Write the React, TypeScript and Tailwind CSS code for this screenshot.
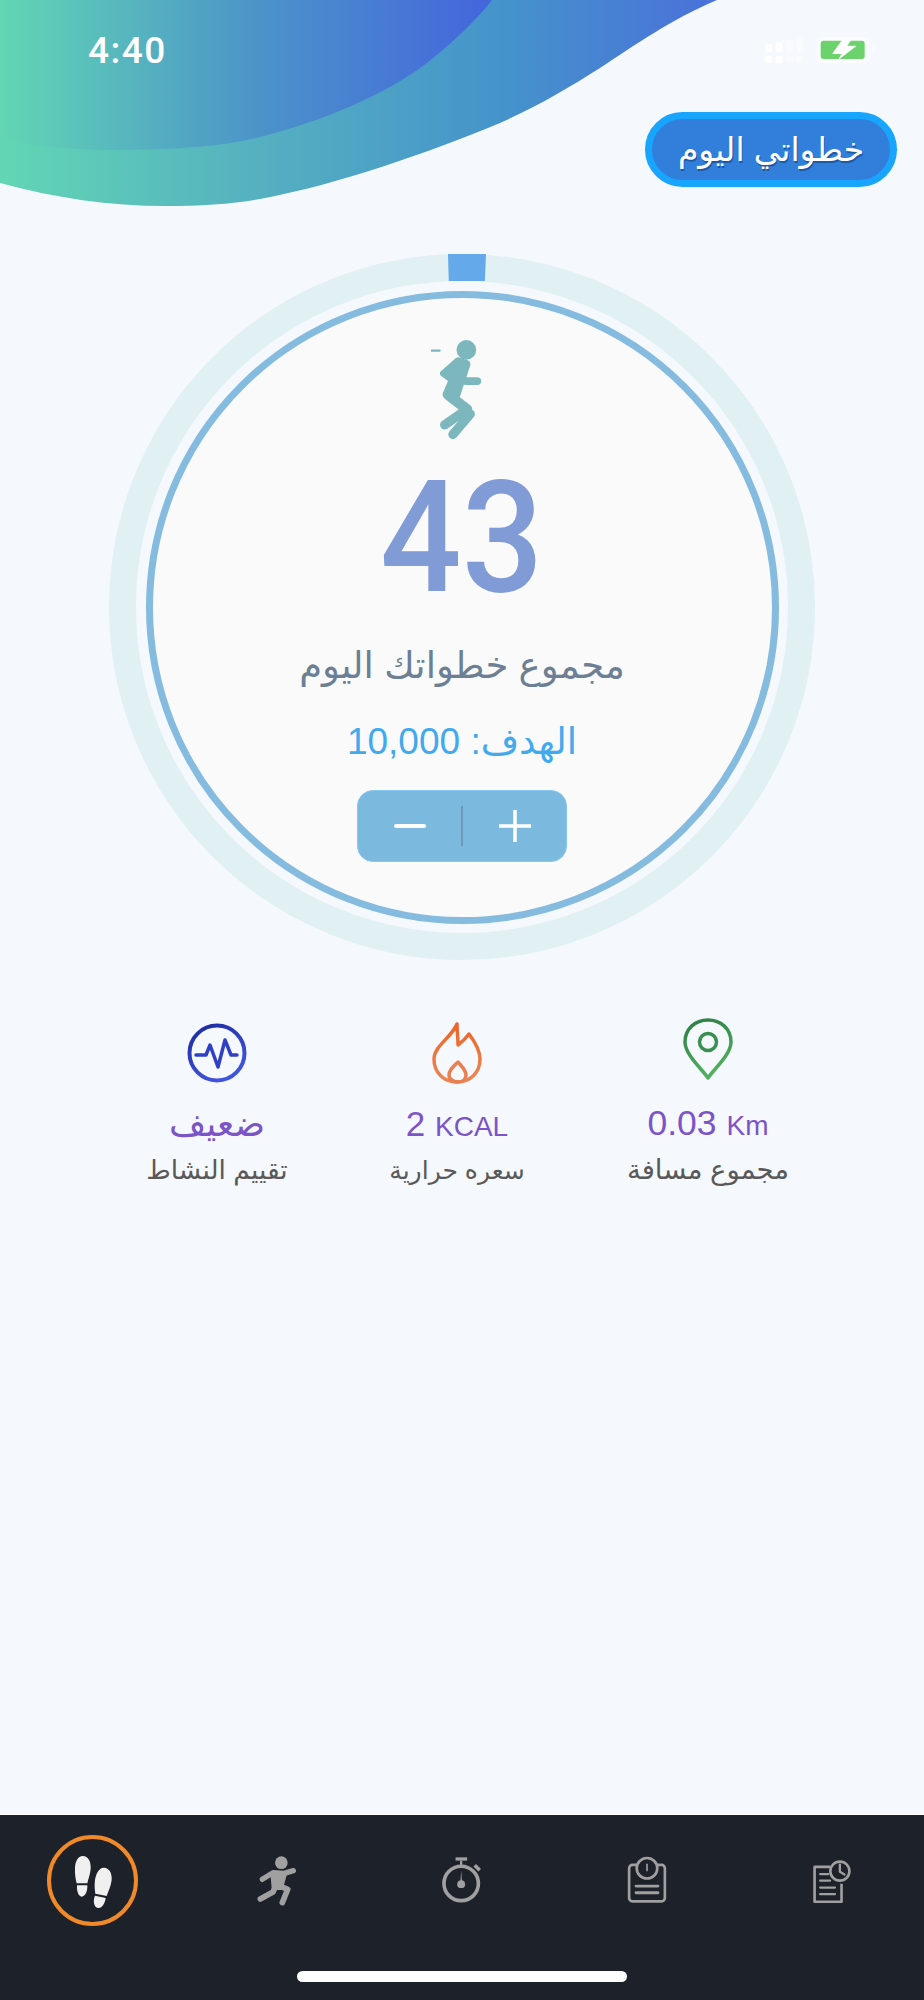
const AR = "font-['Liberation_Sans','DejaVu_Sans',sans-serif]";

function Wave() {
  return (
    <svg className="absolute left-0 top-0" width="924" height="210" viewBox="0 0 924 210">
      <defs>
        <linearGradient id="g1" gradientUnits="userSpaceOnUse" x1="0" y1="0" x2="720" y2="0">
          <stop offset="0" stopColor="#62d6b4" />
          <stop offset="0.36" stopColor="#55b0c0" />
          <stop offset="0.69" stopColor="#4594cb" />
          <stop offset="1" stopColor="#4a70da" />
        </linearGradient>
        <linearGradient id="g2" gradientUnits="userSpaceOnUse" x1="0" y1="0" x2="492" y2="0">
          <stop offset="0" stopColor="#62d6b4" />
          <stop offset="0.53" stopColor="#4b93c9" />
          <stop offset="1" stopColor="#4465dd" />
        </linearGradient>
      </defs>
      <path d="M0 183 C55 198 110 206 165 206 C200 206 235 204 260 199 C340 184 430 152 500 123 C540 105 570 87 600 68 C635 45 670 20 717 0 L0 0 Z" fill="url(#g1)" />
      <path d="M0 138 C40 148 80 150 118 150 C175 150 225 146 260 137 C320 122 385 95 427 63 C452 43 475 22 492 0 L0 0 Z" fill="url(#g2)" />
    </svg>
  );
}

function StatusBar() {
  return (
    <div className="flex h-[112px] items-start justify-between pl-[88px] pr-[49px] pt-[31px]">
      <span className="font-['Roboto',sans-serif] text-[37px] font-medium leading-[40px] tracking-[1.5px] text-white">4:40</span>
      <div className="mt-[6px] flex items-start gap-[12px]">
        <svg width="41" height="27" viewBox="28 20 122 82">
          <rect x="30" y="42" width="22" height="24" rx="7" fill="#fff" />
          <rect x="62" y="36" width="22" height="30" rx="7" fill="#fff" />
          <rect x="95" y="28" width="21" height="38" rx="7" fill="#fff" fillOpacity="0.45" />
          <rect x="125" y="22" width="22" height="44" rx="7" fill="#fff" fillOpacity="0.45" />
          <rect x="30" y="78" width="22" height="22" rx="7" fill="#fff" />
          <rect x="62" y="78" width="22" height="22" rx="7" fill="#fff" />
          <rect x="95" y="78" width="21" height="22" rx="7" fill="#fff" fillOpacity="0.45" />
          <rect x="125" y="78" width="22" height="22" rx="7" fill="#fff" fillOpacity="0.45" />
        </svg>
        <svg width="58" height="26" viewBox="187 22 174 78">
          <rect x="187" y="22" width="158" height="78" rx="20" fill="#fff" fillOpacity="0.55" />
          <rect x="352" y="50" width="8" height="22" rx="4" fill="#fff" fillOpacity="0.6" />
          <rect x="198" y="33" width="132" height="55" rx="9" fill="#6bd26c" />
          <path d="M262 31 L232 73 H260 L250 92 L306 48 H278 L290 31 Z" fill="#fff" />
        </svg>
      </div>
    </div>
  );
}

function Runner() {
  return (
    <svg className="mr-[11px]" width="53" height="100" viewBox="450 292 160 304">
      <circle cx="560" cy="325" r="30" fill="#7bb7bd" />
      <rect x="452" y="324" width="30" height="7" rx="3" fill="#7bb7bd" />
      <path d="M528 350 L480 392 Q478 402 486 406 L504 420 L488 458 Q486 468 495 472 L540 468 L572 372 Q574 360 562 356 L540 348 Q533 346 528 350Z" fill="#7bb7bd" />
      <path d="M558 420 L593 420" stroke="#7bb7bd" strokeWidth="24" strokeLinecap="round" />
      <path d="M505 462 L562 506" stroke="#7bb7bd" strokeWidth="32" strokeLinecap="round" />
      <path d="M562 506 L494 553" stroke="#7bb7bd" strokeWidth="28" strokeLinecap="round" />
      <path d="M572 520 L519 582" stroke="#7bb7bd" strokeWidth="28" strokeLinecap="round" />
    </svg>
  );
}

function Dial() {
  return (
    <div className="relative mx-auto mt-[67px] h-[706px] w-[706px] rounded-full border-[27px] border-[#e1f1f3] p-[9.5px]">
      <div className="absolute left-[calc(50%+5px)] top-[-27px] h-[27px] w-[38px] -translate-x-1/2 bg-[#64a9e9] [clip-path:polygon(0_0,100%_0,97%_100%,2%_100%)]" />
      <div className="flex h-full w-full flex-col items-center rounded-full border-[7px] border-[#86bbe0] bg-[#fafafa] pt-[41px]">
        <Runner />
        <div className="mt-[36px] h-[125px] origin-center scale-x-[0.92] font-['Roboto',sans-serif] text-[156px] font-medium leading-[125px] text-[#819bd7]">43</div>
        <div dir="rtl" className={`${AR} mt-[41px] text-[37px] leading-[50px] text-[#6c7f95]`}>مجموع خطواتك اليوم</div>
        <div dir="rtl" className={`${AR} mt-[29px] text-[37px] leading-[44px] text-[#42a9ee]`}>الهدف: 10,000</div>
        <div className="mt-[26px] flex h-[72px] w-[210px] items-center rounded-[16px] border border-[#87c6ee] bg-[#7cb9df]">
          <div className="flex flex-1 justify-center">
            <div className="h-[4px] w-[32px] rounded-full bg-white" />
          </div>
          <div className="h-[40px] w-[2px] bg-[#6f97b5]" />
          <div className="flex flex-1 justify-center">
            <svg width="32" height="32" viewBox="0 0 32 32"><path d="M0 16H32M16 0V32" stroke="#fff" strokeWidth="3.5" strokeLinecap="round" /></svg>
          </div>
        </div>
      </div>
    </div>
  );
}

function PulseIcon() {
  return (
    <svg width="60" height="60" viewBox="0 0 60 60">
      <defs>
        <linearGradient id="p" x1="0" y1="0" x2="0.5" y2="1">
          <stop offset="0" stopColor="#1c2a9e" />
          <stop offset="1" stopColor="#4055de" />
        </linearGradient>
      </defs>
      <circle cx="30" cy="30" r="27.5" fill="none" stroke="url(#p)" strokeWidth="4" />
      <path d="M9 32H19L23 22L31 44L38 17L44 32H50" fill="none" stroke="#2f3fc6" strokeWidth="3.5" strokeLinecap="round" strokeLinejoin="round" />
    </svg>
  );
}

function FlameIcon() {
  return (
    <svg width="50" height="62" viewBox="310 21 50 62">
      <defs>
        <linearGradient id="f" x1="0" y1="0" x2="0" y2="1">
          <stop offset="0" stopColor="#ee6529" />
          <stop offset="1" stopColor="#ea8755" />
        </linearGradient>
      </defs>
      <path d="M335 23 C335 30 336 37 336 44 C340 41 344 37 347 33 C353 41 358 50 358 58 C358 72 348 81 335 81 C322 81 312 72 312 58 C312 45 330 36 335 23 Z" fill="none" stroke="url(#f)" strokeWidth="3.5" strokeLinejoin="round" />
      <path d="M336 61 C331 66 327 69 327 74 C327 78 331 81 336 81 C341 81 344 78 344 74 C344 69 340 66 336 61 Z" fill="none" stroke="#ea8050" strokeWidth="3.5" strokeLinejoin="round" />
    </svg>
  );
}

function PinIcon() {
  return (
    <svg width="50" height="62" viewBox="0 0 50 62">
      <defs>
        <linearGradient id="n" x1="0" y1="0" x2="0.3" y2="1">
          <stop offset="0" stopColor="#2e7d45" />
          <stop offset="1" stopColor="#50b060" />
        </linearGradient>
      </defs>
      <path d="M25 60 C20 52 2 37 2 24 C2 11 12 2 25 2 C38 2 48 11 48 24 C48 37 30 52 25 60 Z" fill="none" stroke="url(#n)" strokeWidth="3.5" strokeLinejoin="round" />
      <circle cx="25" cy="24" r="8.5" fill="none" stroke="#3a8f50" strokeWidth="3.5" />
    </svg>
  );
}

function Metric({ icon, value, label, iconClass, labelClass }: { icon: React.ReactNode; value: React.ReactNode; label: string; iconClass: string; labelClass: string }) {
  return (
    <div className="flex w-[240px] flex-col items-center">
      <div className={`flex h-[81px] items-start ${iconClass}`}>{icon}</div>
      <div className={`${AR} flex h-[50px] items-center text-[#7c54c7]`}>{value}</div>
      <div dir="rtl" className={`${AR} mt-[3px] leading-[36px] text-[#595959] ${labelClass}`}>{label}</div>
    </div>
  );
}

function Metrics() {
  return (
    <div className="mt-[58px] flex pl-[97px]">
      <Metric iconClass="pt-[5px]" labelClass="text-[26.5px]" icon={<PulseIcon />} label="تقييم النشاط" value={<span dir="rtl" className="text-[36px]">ضعيف</span>} />
      <Metric iconClass="pt-[4px]" labelClass="text-[25px]" icon={<FlameIcon />} label="سعره حرارية" value={<span className="text-[35px]">2 <span className="text-[28px]">KCAL</span></span>} />
      <div className="ml-[11px]">
        <Metric iconClass="pt-0" labelClass="text-[27.5px]" icon={<PinIcon />} label="مجموع مسافة" value={<span className="text-[35.5px]">0.03 <span className="text-[28px]">Km</span></span>} />
      </div>
    </div>
  );
}

function Feet() {
  return (
    <svg width="65" height="70" viewBox="0 0 195 210" fill="#f1f0f1">
      <path d="M68 30 C85 30 93 47 92 68 C91 85 84 100 82 112 L50 112 C47 100 44 85 45 66 C46 45 54 30 68 30Z" />
      <path d="M51 118 L82 118 C83 135 76 152 65 152 C55 152 50 135 51 118Z" />
      <path d="M132 65 C148 66 157 82 155 102 C153 120 145 135 140 150 L106 143 C104 130 103 118 105 102 C108 82 118 64 132 65Z" />
      <path d="M105 149 L137 156 C135 172 125 188 114 186 C102 184 98 165 105 149Z" />
    </svg>
  );
}

function NavRun() {
  return (
    <svg className="ml-[3px]" width="60" height="65" viewBox="0 0 180 195" fill="none" stroke="#a0a0a0" strokeLinecap="round" strokeLinejoin="round">
      <circle cx="97" cy="38" r="19" fill="#a0a0a0" stroke="none" />
      <path d="M40 88 L72 68 L106 70 L133 62" strokeWidth="16" />
      <path d="M70 70 L108 72 L96 114 L74 114 Z" fill="#a0a0a0" strokeWidth="12" />
      <path d="M80 108 L72 126 L34 147" strokeWidth="17" />
      <path d="M88 106 L116 118 L100 158" strokeWidth="17" />
    </svg>
  );
}

function NavWatch() {
  return (
    <svg width="41" height="48" viewBox="1325 170 122 145" fill="none" stroke="#a0a0a0">
      <circle cx="1385" cy="253" r="52" strokeWidth="11" />
      <path d="M1368 179H1403" strokeWidth="10" />
      <path d="M1385 184V198" strokeWidth="7" />
      <path d="M1426 198L1441 213" strokeWidth="11" />
      <circle cx="1385" cy="255" r="12" fill="#a0a0a0" stroke="none" />
      <path d="M1382 255L1385 214L1388 255Z" fill="#a0a0a0" stroke="none" />
    </svg>
  );
}

function NavClip() {
  return (
    <svg width="42" height="48" viewBox="378 170 124 145" fill="none" stroke="#a0a0a0">
      <rect x="386" y="197" width="108" height="110" rx="10" strokeWidth="8" />
      <circle cx="440" cy="207" r="31" fill="#1d2129" strokeWidth="8" />
      <path d="M440 195V214" strokeWidth="5" strokeLinecap="round" />
      <path d="M407 261H473M407 281H473" strokeWidth="9" strokeLinecap="round" />
    </svg>
  );
}

function NavDoc() {
  return (
    <svg width="40" height="46" viewBox="936 172 120 140" fill="none" stroke="#a0a0a0">
      <path d="M1025 250V305H943V199H990" strokeWidth="8" strokeLinejoin="round" />
      <circle cx="1020" cy="212" r="29" fill="#1d2129" strokeWidth="8" />
      <path d="M1020 192V214L1034 222" strokeWidth="7" strokeLinecap="round" strokeLinejoin="round" />
      <path d="M960 221H985M960 241H990M960 262H1005M960 282H1005" strokeWidth="7" strokeLinecap="round" />
    </svg>
  );
}

function Nav() {
  return (
    <div className="flex h-[186px] flex-col border-t border-t-white bg-[#1d2129]">
      <div className="grid h-[156px] grid-cols-5">
        <div className="flex items-start justify-center pt-[20px]">
          <div className="flex h-[91px] w-[91px] items-center justify-center rounded-full border-[4px] border-[#f0892a]"><Feet /></div>
        </div>
        <div className="flex items-start justify-center pt-[35px]"><NavRun /></div>
        <div className="flex items-start justify-center pt-[41px]"><NavWatch /></div>
        <div className="flex items-start justify-center pt-[41px]"><NavClip /></div>
        <div className="flex items-start justify-center pt-[43px]"><NavDoc /></div>
      </div>
      <div className="mx-auto h-[11px] w-[330px] rounded-full bg-white" />
    </div>
  );
}

export default function App() {
  return (
    <div className="relative flex h-[2000px] w-[924px] flex-col overflow-hidden bg-[#f5f8fd]">
      <Wave />
      <div className="relative flex flex-1 flex-col">
        <StatusBar />
        <div className="flex justify-end pr-[27px]">
          <div dir="rtl" className={`${AR} flex h-[75px] w-[252px] items-center justify-center rounded-full border-[7px] border-[#18a5ff] bg-[#317fdb] text-[33px] text-white [text-shadow:1px_2px_0_#1c5aa5]`}>خطواتي اليوم</div>
        </div>
        <Dial />
        <Metrics />
      </div>
      <Nav />
    </div>
  );
}
